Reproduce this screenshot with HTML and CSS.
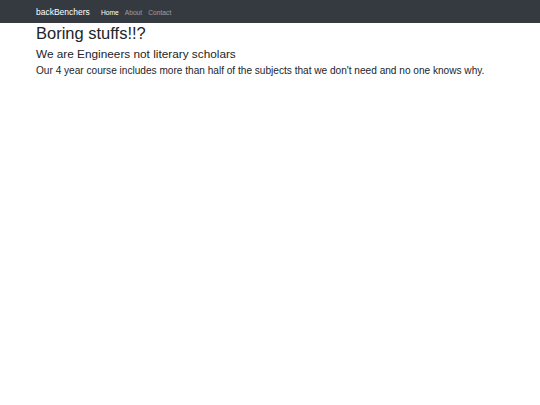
FILE: index.html
```html
<!DOCTYPE html>
<html lang="en">
<head>
  <meta charset="UTF-8" />
  <title>backBenchers</title>
  <link rel="stylesheet" href="styles.css">
</head>
<body>
  <nav class="navbar">
    <div class="container nav-inner">
      <a class="brand" href="#">backBenchers</a>
      <a class="nav-link active" href="#">Home</a>
      <a class="nav-link" href="#">About</a>
      <a class="nav-link" href="#">Contact</a>
    </div>
  </nav>
  <main class="container">
    <h1>Boring stuffs!!?</h1>
    <h2>We are Engineers not literary scholars</h2>
    <p>Our 4 year course includes more than half of the subjects that we don't need and no one knows why.</p>
  </main>
</body>
</html>
```

FILE: styles.css
```css
body {
  margin: 0;
  font-family: "Liberation Sans", Arial, sans-serif;
  color: #212529;
  background: #fff;
}
.container {
  padding: 0 36px;
}
.navbar {
  background: #343a40;
  height: 23px;
}
.nav-inner {
  display: flex;
  align-items: center;
  height: 100%;
  padding-top: 1px;
  box-sizing: border-box;
}
.navbar a {
  text-decoration: none;
}
.brand {
  color: #fff;
  font-size: 8.5px;
  margin-right: 11px;
}
.nav-link {
  color: rgba(255, 255, 255, 0.5);
  font-size: 6.7px;
  margin-right: 6px;
}
.nav-link.active {
  color: #fff;
}
h1 {
  font-size: 16.5px;
  font-weight: 400;
  margin: 1px 0 0;
  line-height: 1.2;
}
h2 {
  font-size: 11.8px;
  font-weight: 400;
  margin: 3.5px 0 0;
  line-height: 1.2;
}
p {
  font-size: 10.1px;
  margin: 2.6px 0 0;
  line-height: 1.3;
}
```
